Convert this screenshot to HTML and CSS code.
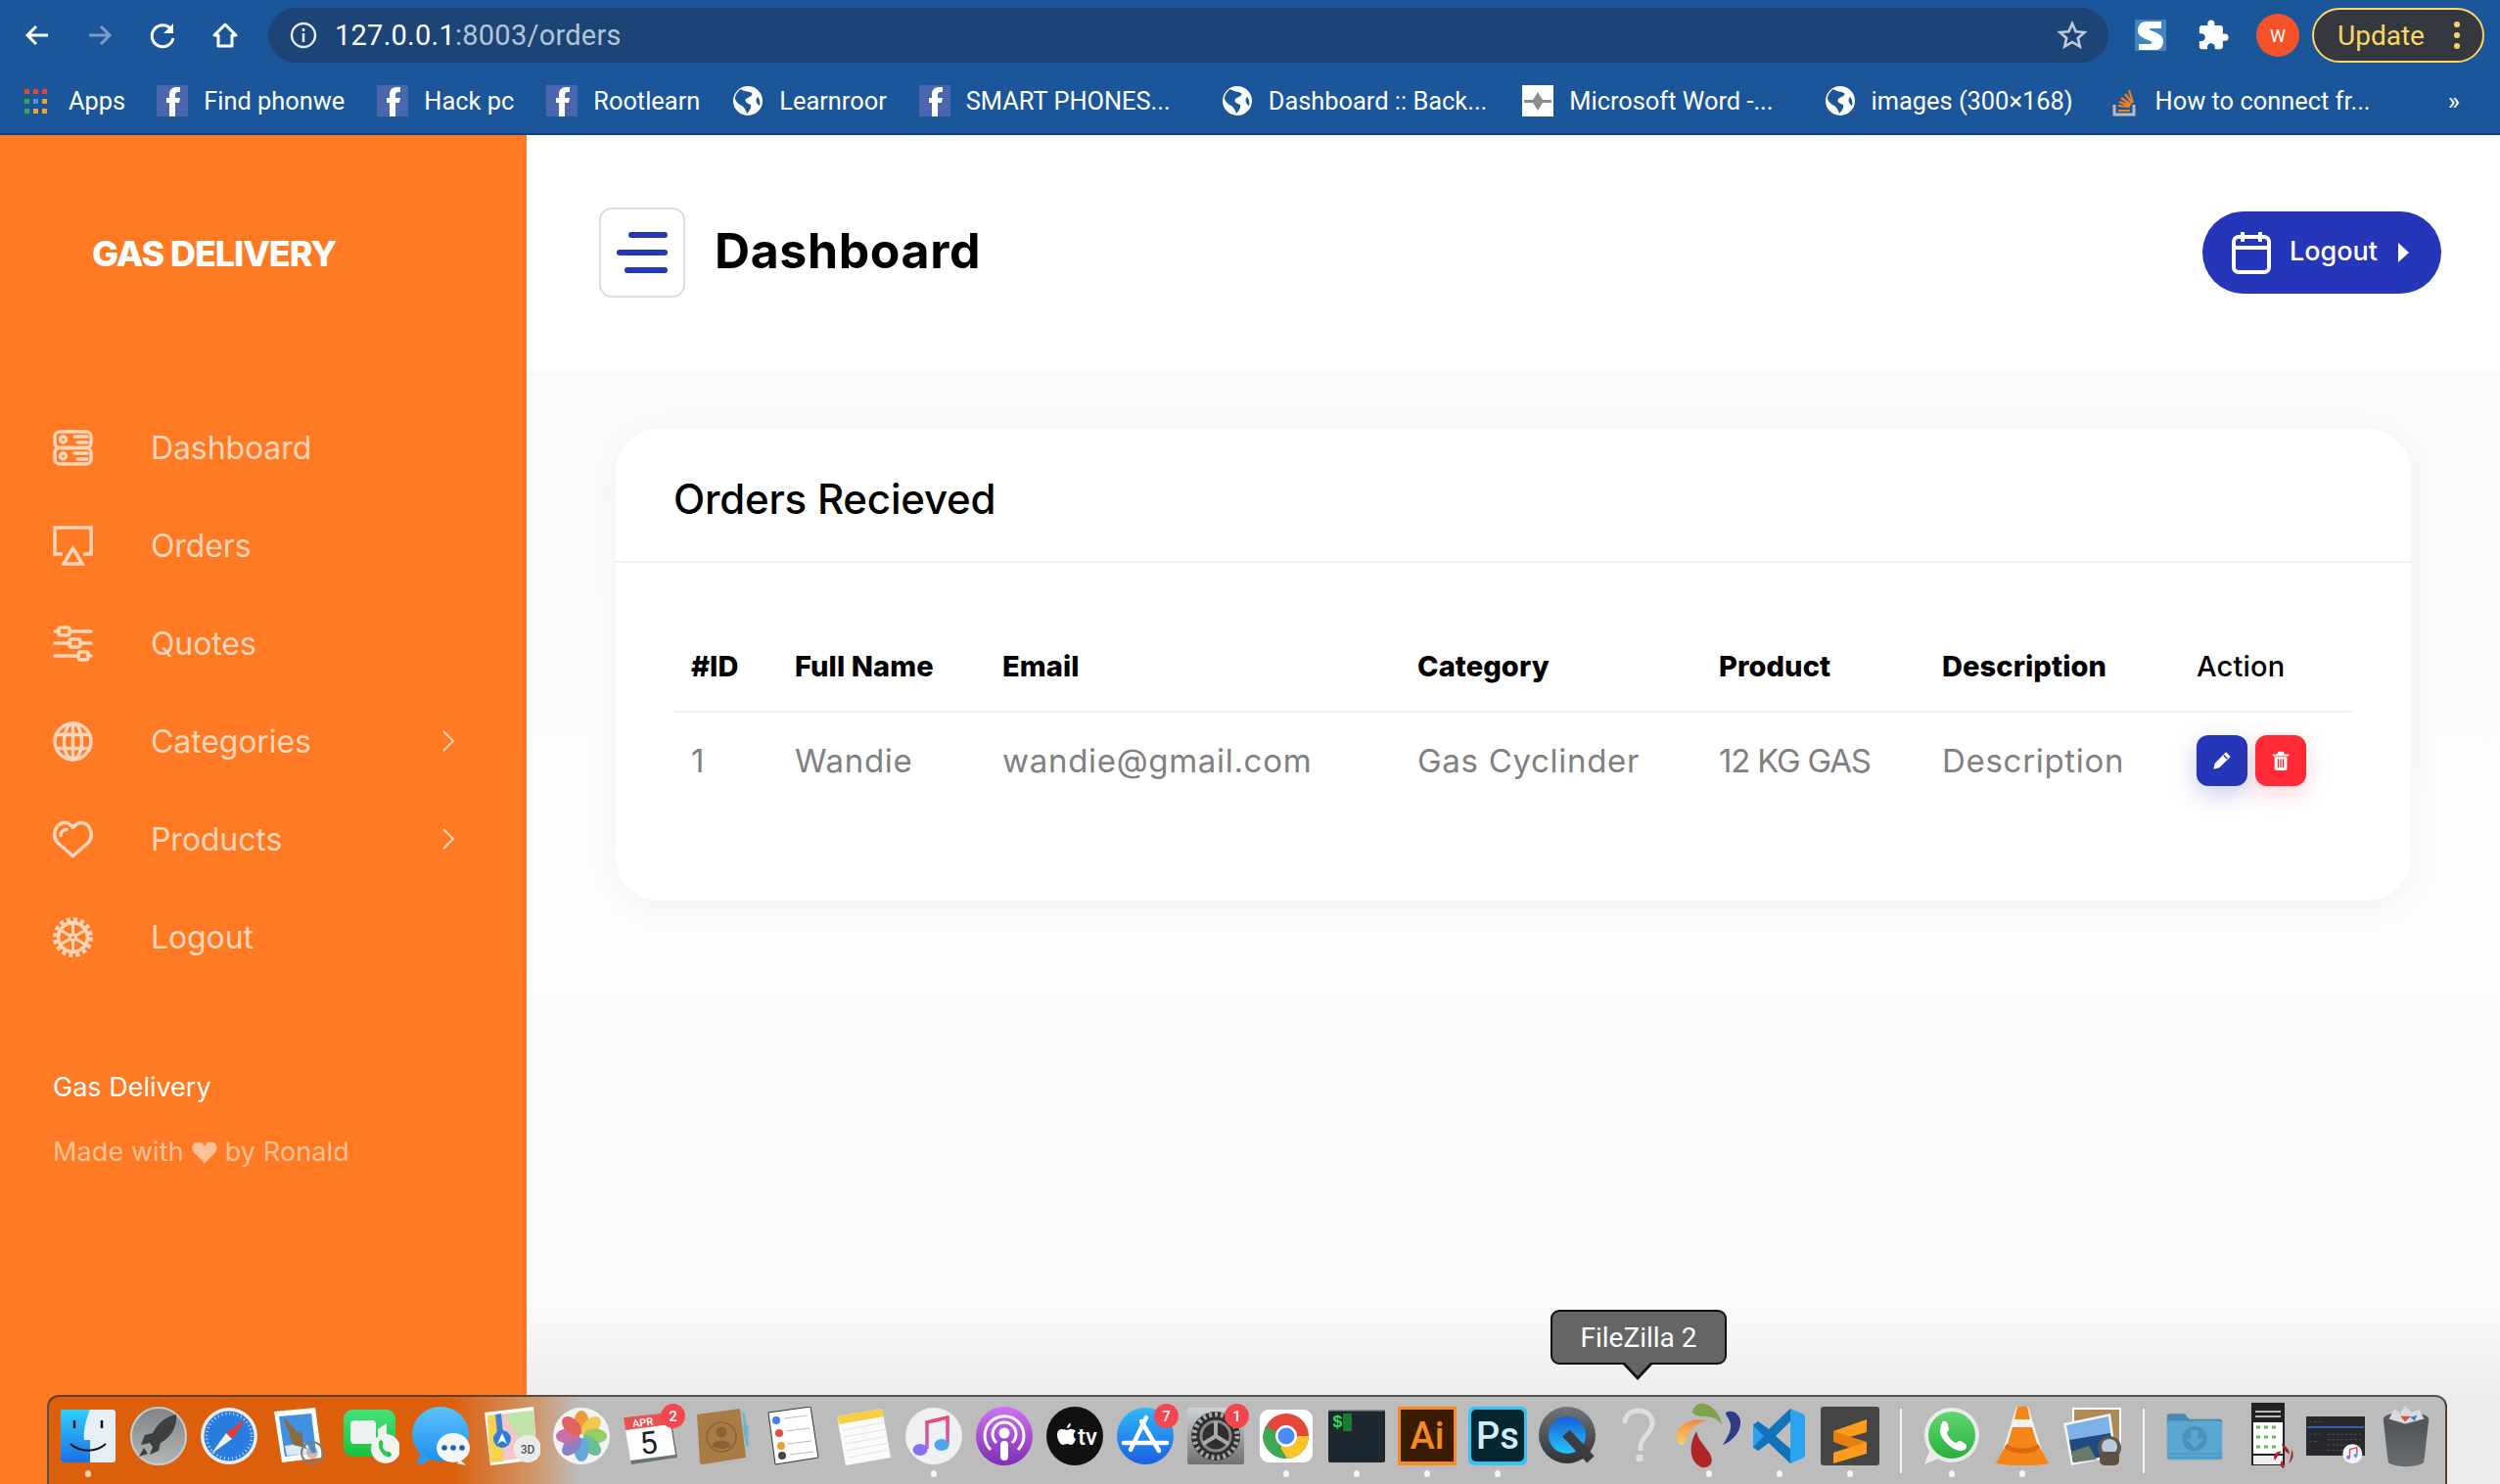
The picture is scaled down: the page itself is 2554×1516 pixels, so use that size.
FILE: index.html
```html
<!DOCTYPE html>
<html lang="en">
<head>
<meta charset="utf-8">
<title>Orders</title>
<link rel="stylesheet" href="styles.css">
</head>
<body>
<div class="screen">
  <header class="chrome">
    <div class="toolbar">
      <div class="nav-icons">
        <svg class="tb-ic" viewBox="0 0 32 32"><path d="M27 16H7M15 7l-9 9 9 9" fill="none" stroke="#fff" stroke-width="3"/></svg>
        <svg class="tb-ic" viewBox="0 0 32 32"><path d="M5 16h20M17 7l9 9-9 9" fill="none" stroke="#7c9cc4" stroke-width="3"/></svg>
        <svg class="tb-ic" viewBox="0 0 32 32"><path d="M25 10a11 11 0 1 0 2 9" fill="none" stroke="#fff" stroke-width="3"/><path d="M27 4v10H17z" fill="#fff"/></svg>
        <svg class="tb-ic" viewBox="0 0 32 32"><path d="M16 5 5 16h4v11h14V16h4z" fill="none" stroke="#fff" stroke-width="3" stroke-linejoin="round"/></svg>
      </div>
      <div class="omnibox">
        <svg class="info-ic" viewBox="0 0 28 28"><circle cx="14" cy="14" r="12" fill="none" stroke="#e6ebf2" stroke-width="2.4"/><path d="M14 12v9M14 7v3" stroke="#e6ebf2" stroke-width="2.6"/></svg>
        <span class="url"><span class="url-host">127.0.0.1</span>:8003/orders</span>
        <svg class="star-ic" viewBox="0 0 32 32"><path d="m16 4 3.6 8.200 8.900.8-6.700 5.900 2 8.700-7.800-4.600-7.800 4.600 2-8.700L3.500 13l8.900-.8z" fill="none" stroke="#c3cbd6" stroke-width="2.600"/></svg>
      </div>
      <svg class="ext-s" viewBox="0 0 32 32"><rect width="32" height="32" fill="#3f85c0"/><path d="M27 9V2H12C5 2 3 7 3 11c0 5 4 7 8 9l5 2c2 1 1 3-1 3H4v6h17c6 0 8-5 8-9 0-5-4-7-8-9l-5-2c-2-1-1-2 1-2z" fill="#fff"/></svg>
      <svg class="ext-p" viewBox="0 0 24 24"><path d="M20.500 11H19V7a2 2 0 0 0-2-2h-4V3.500a2.500 2.500 0 0 0-5 0V5H4a2 2 0 0 0-2 2v3.800h1.500c1.500 0 2.700 1.200 2.700 2.700s-1.200 2.700-2.700 2.700H2V20a2 2 0 0 0 2 2h3.800v-1.500c0-1.500 1.200-2.700 2.700-2.700s2.700 1.200 2.700 2.700V22H17a2 2 0 0 0 2-2v-4h1.500a2.500 2.500 0 0 0 0-5z" fill="#fff"/></svg>
      <span class="avatar">W</span>
      <span class="update"><span>Update</span><span class="update-dots"><i></i><i></i><i></i></span></span>
    </div>
    <nav class="bookmarks">
      <span class="bm bm-apps"><svg class="bm-ic" viewBox="0 0 26 26"><path d="M1 1h5v5H1zM10 1h5v5h-5zM19 1h5v5h-5z" fill="#e8443a"/><path d="M1 11h5v5H1z" fill="#37a853"/><path d="M10 11h5v5h-5z" fill="#4c8df0"/><path d="M19 11h5v5h-5z" fill="#f3a32c"/><path d="M1 21h5v5H1z" fill="#37a853"/><path d="M10 21h5v5h-5z" fill="#f3a32c"/><path d="M19 21h5v5h-5z" fill="#f3a32c"/></svg>Apps</span>
      <span class="bm"><svg class="bm-ic" viewBox="0 0 32 32"><use href="#fb"/></svg>Find phonwe</span>
      <span class="bm"><svg class="bm-ic" viewBox="0 0 32 32"><use href="#fb"/></svg>Hack pc</span>
      <span class="bm"><svg class="bm-ic" viewBox="0 0 32 32"><use href="#fb"/></svg>Rootlearn</span>
      <span class="bm"><svg class="bm-ic" viewBox="0 0 32 32"><use href="#globe"/></svg>Learnroor</span>
      <span class="bm bm-long"><svg class="bm-ic" viewBox="0 0 32 32"><use href="#fb"/></svg>SMART PHONES...</span>
      <span class="bm bm-mid"><svg class="bm-ic" viewBox="0 0 32 32"><use href="#globe"/></svg>Dashboard :: Back...</span>
      <span class="bm bm-long"><svg class="bm-ic" viewBox="0 0 32 32"><rect width="32" height="32" fill="#fff"/><path d="M2 15h9l2-3 3-5 3 5 2 3h9v3h-9l-2 3-3 5-3-5-2-3H2z" fill="#8b8b8b"/></svg>Microsoft Word -...</span>
      <span class="bm bm-mid"><svg class="bm-ic" viewBox="0 0 32 32"><use href="#globe"/></svg>images (300×168)</span>
      <span class="bm"><svg class="bm-ic" viewBox="0 0 32 32"><path d="M6 20v10h20V20" fill="none" stroke="#bcbbbb" stroke-width="3"/><path d="M10 25h12v2H10z" fill="#f48024"/><path d="m10 21 12 1M11 17l11 4M13 13l10 7M17 9l7 9M21 5l4 13" stroke="#f48024" stroke-width="2.200"/></svg>How to connect fr...</span>
      <span class="bm-more">»</span>
    </nav>
  </header>

  <div class="app">
    <aside class="sidebar">
      <div class="brand">GAS DELIVERY</div>
      <ul class="menu">
        <li class="menu-item">
          <svg class="menu-ic" viewBox="0 0 41 37"><g fill="none" stroke="currentColor" stroke-width="3.500"><rect x="2" y="2" width="37" height="16.500" rx="5"/><rect x="2" y="18.500" width="37" height="16.500" rx="5"/><circle cx="10.500" cy="10" r="3"/><circle cx="10.500" cy="27" r="3"/><path d="M22 7h13M25 13h10M22 24h13M25 30h10" stroke-linecap="round"/></g></svg>
          <span>Dashboard</span>
        </li>
        <li class="menu-item">
          <svg class="menu-ic" viewBox="0 0 41 41"><g fill="none" stroke="currentColor" stroke-width="3.500"><path d="M10 29H2V2h37v27h-8"/><path d="m20.500 23 9.500 16H11z"/></g></svg>
          <span>Orders</span>
        </li>
        <li class="menu-item">
          <svg class="menu-ic" viewBox="0 0 41 37"><g fill="none" stroke="currentColor" stroke-width="3.500"><path d="M2 6h4M18 6h21M2 18h16M28 18h11M2 31h24M36 31h3" stroke-linecap="round"/><rect x="6" y="2" width="11" height="8" rx="2"/><rect x="17" y="14" width="11" height="8" rx="2"/><rect x="26" y="27" width="10" height="8" rx="2"/></g></svg>
          <span>Quotes</span>
        </li>
        <li class="menu-item">
          <svg class="menu-ic" viewBox="0 0 41 41"><g fill="none" stroke="currentColor" stroke-width="3.500"><circle cx="20.500" cy="20.500" r="18.500"/><ellipse cx="20.500" cy="20.500" rx="9" ry="18.500"/><path d="M4 13.500h33M4 27.500h33M20.500 2v37"/></g></svg>
          <span>Categories</span>
          <svg class="menu-chev" viewBox="0 0 14 24"><path d="m2 2 10 10L2 22" fill="none" stroke="currentColor" stroke-width="2"/></svg>
        </li>
        <li class="menu-item">
          <svg class="menu-ic" viewBox="0 0 41 38"><g fill="none" stroke="currentColor" stroke-width="3.500" stroke-linecap="round" stroke-linejoin="round"><path d="M20.500 36 5 22.500C-1 16 2 3 11 2c5-.5 7.500 2 9.500 5 2-3 4.500-5.500 9.500-5 9 1 12 14 6 20.500z"/><path d="M8 15c0-3 2-6 6-6"/></g></svg>
          <span>Products</span>
          <svg class="menu-chev" viewBox="0 0 14 24"><path d="m2 2 10 10L2 22" fill="none" stroke="currentColor" stroke-width="2"/></svg>
        </li>
        <li class="menu-item">
          <svg class="menu-ic" viewBox="0 0 40 40"><g fill="none" stroke="currentColor"><circle cx="20" cy="20" r="14.500" stroke-width="3.500"/><circle cx="20" cy="20" r="18" stroke-width="4" stroke-dasharray="4 3.070"/><circle cx="20" cy="20" r="3" stroke-width="3"/><path d="M20 17V6M17.400 21.500 8 27M22.600 21.500 32 27M17.400 18.500 8 13M22.600 18.500 32 13M20 23v11" stroke-width="3"/></g></svg>
          <span>Logout</span>
        </li>
      </ul>
      <div class="side-foot">
        <p class="foot-title">Gas Delivery</p>
        <p class="foot-note">Made with <svg class="foot-heart" viewBox="0 0 32 28"><path d="M16 28 3 15C-2 9 1 1 8 1c4 0 6 2 8 5 2-3 4-5 8-5 7 0 10 8 5 14z" fill="currentColor"/></svg> by Ronald</p>
      </div>
    </aside>

    <main class="main">
      <div class="topbar">
        <button class="toggle" type="button"><i class="bar bar-a"></i><i class="bar bar-b"></i><i class="bar bar-c"></i></button>
        <h1 class="page-title">Dashboard</h1>
        <button class="logout" type="button">
          <svg class="logout-cal" viewBox="0 0 40 44"><g fill="none" stroke="#fff" stroke-width="4"><rect x="2" y="6" width="36" height="36" rx="5"/><path d="M2 17h36M11 1v10M29 1v10"/></g></svg>
          <span>Logout</span>
          <svg class="logout-arrow" viewBox="0 0 12 20"><path d="m1 0 11 10L1 20z" fill="#fff"/></svg>
        </button>
      </div>
      <section class="card">
        <h2 class="card-title">Orders Recieved</h2>
        <div class="card-body">
          <table class="table">
            <colgroup><col class="c-id"><col class="c-name"><col class="c-mail"><col class="c-cat"><col class="c-prod"><col class="c-desc"><col class="c-act"></colgroup>
            <thead>
              <tr><th>#ID</th><th>Full Name</th><th>Email</th><th>Category</th><th>Product</th><th>Description</th><th class="th-action">Action</th></tr>
            </thead>
            <tbody>
              <tr>
                <td>1</td><td>Wandie</td><td>wandie@gmail.com</td><td>Gas Cyclinder</td><td class="td-caps">12 KG GAS</td><td>Description</td>
                <td>
                  <div class="actions">
                    <button class="act act-edit" type="button"><svg viewBox="0 0 24 24"><path d="M16.500 2.500 21.500 7.500 9 20l-6.500 1.500L4 15z" fill="#fff"/><path d="m14 6 4 4" stroke="#2536b8" stroke-width="1.500"/></svg></button>
                    <button class="act act-del" type="button"><svg viewBox="0 0 24 24"><path d="M3 5h18v2H3zM9 2h6l1 3H8z" fill="#fff"/><path d="M5 8h14v13a2 2 0 0 1-2 2H7a2 2 0 0 1-2-2zM8.500 10v10h1.500V10zm2.750 0v10h1.500V10zm2.750 0v10h1.500V10z" fill="#fff" fill-rule="evenodd"/></svg></button>
                  </div>
                </td>
              </tr>
            </tbody>
          </table>
        </div>
      </section>
    </main>
  </div>

  <div class="tooltip"><span>FileZilla 2</span></div>

  <footer class="dock">
    <div class="cell on-orange dot"><svg viewBox="0 0 60 60"><rect x="2" y="3" width="56" height="54" rx="3" fill="#e6eef8"/><path d="M5 3h27c-5 12-7 22-6 31h6v23H5a3 3 0 0 1-3-3V6a3 3 0 0 1 3-3z" fill="url(#gFinder)"/><path d="M16 14v8M44 14v8" stroke="#111" stroke-width="2.500"/><path d="M12 38c10 9 26 9 36 0" stroke="#111" stroke-width="2" fill="none"/></svg></div>
    <div class="cell"><svg viewBox="0 0 60 60"><ellipse cx="30" cy="30" rx="29" ry="30" fill="url(#gLaunch)"/><ellipse cx="30" cy="30" rx="28" ry="29" fill="none" stroke="#c8cacb" stroke-width="2"/><path d="M48 8c-11 2-19 9-24 19l-8 2-4 10 9-2 3 4-3 8 9-4 2-8c11-6 17-16 16-29z" fill="#3d3f41"/><path d="m15 42-5 9 9-3z" fill="#3d3f41"/></svg></div>
    <div class="cell"><svg viewBox="0 0 60 60"><circle cx="30" cy="30" r="29" fill="#e8edf2"/><circle cx="30" cy="30" r="25.500" fill="#2a7de0"/><circle cx="30" cy="30" r="23" fill="none" stroke="#cfe3f8" stroke-width="2.500" stroke-dasharray="1 3"/><path d="m48 12-21 15 6 6z" fill="#f0382c"/><path d="m12 48 21-15-6-6z" fill="#f2f2f2"/></svg></div>
    <div class="cell"><svg viewBox="0 0 60 60"><path d="m4 5 42-4 7 51-41 5z" fill="#fff"/><path d="m9 10 33-3 5 40-32 4z" fill="#4290e0"/><path d="m15 40 22-3 6 11-26 2z" fill="#dbe9f7"/><path d="M14 12c6 4 10 9 13 14 5-1 7 3 6 9l5 9c-5-3-8-4-12-4-5-3-6-8-6-13-3-5-5-9-6-15z" fill="#8a6a3f"/><circle cx="43" cy="47" r="11" fill="none" stroke="#7d7d7d" stroke-width="2"/><circle cx="43" cy="47" r="6" fill="#7d7d7d" opacity=".5"/></svg></div>
    <div class="cell"><svg viewBox="0 0 60 60"><rect x="3" y="3" width="53" height="48" rx="9" fill="url(#gFace)"/><rect x="10" y="14" width="26" height="24" rx="4" fill="#eef2ee"/><path d="m38 23 9-6v20l-9-6z" fill="#eef2ee"/><circle cx="46" cy="43" r="15" fill="#f2f4f1"/><path d="M41 34c2 0 3 4 2 6-1 1 2 5 4 6 2-1 5 1 5 3 0 2-3 3-5 2-5-2-9-9-8-14 0-2 1-3 2-3z" fill="#2dc653"/></svg></div>
    <div class="cell"><svg viewBox="0 0 60 60"><ellipse cx="30" cy="28" rx="29" ry="28" fill="url(#gMsg)"/><path d="m10 46-4 13c6 0 10-2 13-6z" fill="#2e9bf2"/><ellipse cx="43" cy="42" rx="17" ry="15" fill="#f3f6f8"/><path d="m50 54 6 6-9-2z" fill="#f3f6f8"/><circle cx="34" cy="42" r="2.800" fill="#1e5fb0"/><circle cx="43" cy="42" r="2.800" fill="#1e5fb0"/><circle cx="52" cy="42" r="2.800" fill="#1e5fb0"/></svg></div>
    <div class="cell"><svg viewBox="0 0 60 60"><path d="m3 6 50-6 4 54-48 6z" fill="#fff"/><path d="m6 9 47-5 3 46-47 7z" fill="#f7c6c6"/><path d="m24 7 29-3 2 38c-14-5-26-20-31-35z" fill="#bfe3a8"/><path d="m6 9 12-1 4 48-13 1z" fill="#f7d24c"/><path d="m14 8 6-1 3 30h-6z" fill="#3c7fd5"/><circle cx="21" cy="33" r="9" fill="#2d7de0"/><path d="m21 27 5 11-5-3-5 3z" fill="#fff"/><circle cx="47" cy="43" r="14" fill="#ecebeb"/><text class="dock-3d" x="47" y="48" text-anchor="middle">3D</text></svg></div>
    <div class="cell"><svg viewBox="0 0 60 60"><circle cx="30" cy="30" r="29" fill="#f3f3f3"/><g opacity=".85"><ellipse cx="30" cy="16" rx="7.500" ry="12" fill="#f08a1d"/><ellipse cx="30" cy="16" rx="7.500" ry="12" fill="#eec430" transform="rotate(45 30 30)"/><ellipse cx="30" cy="16" rx="7.500" ry="12" fill="#8cc350" transform="rotate(90 30 30)"/><ellipse cx="30" cy="16" rx="7.500" ry="12" fill="#4fb68e" transform="rotate(135 30 30)"/><ellipse cx="30" cy="16" rx="7.500" ry="12" fill="#4a9ed8" transform="rotate(180 30 30)"/><ellipse cx="30" cy="16" rx="7.500" ry="12" fill="#7a6cc0" transform="rotate(225 30 30)"/><ellipse cx="30" cy="16" rx="7.500" ry="12" fill="#c0589b" transform="rotate(270 30 30)"/><ellipse cx="30" cy="16" rx="7.500" ry="12" fill="#e24b47" transform="rotate(315 30 30)"/></g></svg></div>
    <div class="cell"><svg viewBox="0 0 60 60"><path d="m2 14 47-5 7 43-47 7z" fill="#6b7478"/><path d="m1 11 46-5 7 43-46 6z" fill="#fff"/><path d="m1 11 46-5 2 12-46 6z" fill="#e9524f"/><text class="dock-apr" x="21" y="20" text-anchor="middle" transform="rotate(-7 21 20)">APR</text><text class="dock-day" x="28" y="48" text-anchor="middle" transform="rotate(-7 28 48)">5</text></svg><b class="badge">2</b></div>
    <div class="cell"><svg viewBox="0 0 60 60"><path d="M50 6h3l4 34-3 1zM51 20l5-1 1 10-5 1z" fill="#6fb4cf"/><path d="m4 8 44-6 6 50-44 7a3 3 0 0 1-3-2z" fill="#a97b45"/><circle cx="29" cy="31" r="15" fill="none" stroke="#8a6233" stroke-width="1.500"/><circle cx="29" cy="26" r="5.500" fill="#8a6233"/><path d="M19 40c3-7 17-7 20 0-5 4-15 4-20 0z" fill="#8a6233"/></svg></div>
    <div class="cell"><svg viewBox="0 0 60 60"><path d="m5 6 43-6 8 52-44 7z" fill="#fff" stroke="#333" stroke-width="1"/><circle cx="13" cy="14" r="4" fill="#3d7ff0"/><circle cx="16" cy="27" r="4" fill="#ec4a3f"/><circle cx="18" cy="40" r="4" fill="#f0a030"/><circle cx="19" cy="50" r="4" fill="#444"/><path d="m21 12 24-3M23 25l24-3M25 38l24-3M27 49l24-3" stroke="#bbb" stroke-width="1.200"/></svg></div>
    <div class="cell"><svg viewBox="0 0 60 60"><path d="m3 10 46-8 9 50-46 8z" fill="#fafafa"/><path d="m3 10 46-8 2 8-46 8z" fill="#f7cf45"/><path d="m8 24 44-8M10 31l44-8M11 38l44-8M12 45l44-8M14 52l42-8" stroke="#e3e3e3" stroke-width="1"/></svg></div>
    <div class="cell dot"><svg viewBox="0 0 60 60"><circle cx="30" cy="30" r="29" fill="#eef0f2"/><path d="M23 43V16l21-5v28" fill="none" stroke="url(#gMusic)" stroke-width="3.500"/><ellipse cx="16" cy="44" rx="7.500" ry="6" fill="#8a70f0"/><ellipse cx="38" cy="39" rx="7.500" ry="6" fill="#4aa5ee"/></svg></div>
    <div class="cell"><svg viewBox="0 0 60 60"><ellipse cx="30" cy="30" rx="29" ry="30" fill="url(#gPod)"/><g fill="none" stroke="#fff" stroke-width="3"><path d="M16 44a20 20 0 1 1 28 0"/><path d="M22 37a12 12 0 1 1 16 0"/></g><circle cx="30" cy="27" r="5.500" fill="#fff"/><rect x="26" y="35" width="8" height="20" rx="4" fill="#fff"/></svg></div>
    <div class="cell"><svg viewBox="0 0 60 60"><ellipse cx="30" cy="30" rx="29" ry="30" fill="#111"/><path d="M17 23c3 0 4 1 5 1s3-2 5-1c2 0 3 1 4 2-3 2-3 6 0 8-1 3-3 6-5 6-1 0-2-1-4-1s-3 1-4 1c-3 0-6-6-6-10 0-4 2-6 5-6zM22 22c0-3 2-5 4-5 0 3-2 5-4 5z" fill="#fff"/><text class="dock-tv" x="43" y="39" text-anchor="middle">tv</text></svg></div>
    <div class="cell"><svg viewBox="0 0 60 60"><circle cx="30" cy="30" r="29" fill="url(#gStore)"/><path d="M31 11 15 44M26 15l18 30M8 37h44" stroke="#fff" stroke-width="4.500" stroke-linecap="round"/></svg><b class="badge">7</b></div>
    <div class="cell"><svg viewBox="0 0 60 60"><rect x="1" y="1" width="58" height="58" rx="2" fill="url(#gPref)"/><circle cx="30" cy="30" r="25" fill="#2f2f2f"/><circle cx="30" cy="30" r="22" fill="none" stroke="#aaa" stroke-width="5" stroke-dasharray="3 3"/><circle cx="30" cy="30" r="15" fill="none" stroke="#888" stroke-width="3"/><path d="M30 30V15M30 30 17 38M30 30l13 8" stroke="#aaa" stroke-width="4"/></svg><b class="badge">1</b></div>
    <div class="cell dot"><svg viewBox="0 0 60 60"><rect x="3" y="3" width="54" height="54" rx="9" fill="#fff"/><circle cx="30" cy="30" r="23" fill="#e5483b"/><path d="M30 30 9 20a23 23 0 0 0 11 31z" fill="#3ea852"/><path d="M30 30h23a23 23 0 0 1-22 23l-11-2z" fill="#f9c52b"/><path d="M9 20 20 35l11 18c-14 1-25-11-25-23z" fill="#3ea852"/><circle cx="30" cy="30" r="11" fill="#fff"/><circle cx="30" cy="30" r="8.500" fill="#4a8af4"/></svg></div>
    <div class="cell dot"><svg viewBox="0 0 60 60"><rect x="1" y="3" width="58" height="54" rx="2" fill="#1d2730"/><rect x="1" y="3" width="58" height="1.500" fill="#8a9096"/><text class="dock-term" x="5" y="21">$</text><rect x="16" y="7" width="9" height="18" fill="#1c7a33"/></svg></div>
    <div class="cell dot"><svg viewBox="0 0 60 60"><rect width="60" height="60" fill="#f58a1f"/><rect x="3" y="3" width="54" height="53" fill="#3a1b00"/><text class="dock-adobe ai" x="30" y="43" text-anchor="middle">Ai</text></svg></div>
    <div class="cell dot"><svg viewBox="0 0 60 60"><rect width="60" height="60" rx="6" fill="#33c4f4"/><rect x="3" y="3" width="54" height="53" rx="5" fill="#05262f"/><text class="dock-adobe ps" x="30" y="43" text-anchor="middle">Ps</text></svg></div>
    <div class="cell"><svg viewBox="0 0 60 60"><circle cx="29" cy="29" r="29" fill="url(#gQt)"/><circle cx="29" cy="29" r="19" fill="url(#gQtIn)"/><path d="M28 27 53 54" stroke="#3a3d41" stroke-width="10"/></svg></div>
    <div class="cell"><svg viewBox="0 0 60 60"><path d="M16 17c0-9 7-13 14-13 8 0 14 5 14 13 0 10-12 13-12 24v4" fill="none" stroke="#dedede" stroke-width="5"/><rect x="27.500" y="49" width="7" height="7" fill="#dedede"/></svg></div>
    <div class="cell dot wide-ic"><svg viewBox="0 0 68 68"><path d="M17 9C18 3 24 0 29 1c9 2 17 11 18 22-4-7-10-9-18-9-5 0-11-1-12-5z" fill="#7fa34c"/><path d="M51 10c6-3 13 0 15 8 1 10-6 20-18 25 5-8 9-15 8-21-1-6-5-8-5-12z" fill="#2d3c84"/><path d="M31 18C20 15 3 20 1 32c-1 5 1 10 4 11 3 1 4-2 5-5 3-9 10-17 21-20z" fill="url(#gFzO)"/><path d="M21 29c-5 9-7 18-4 27 2 6 8 11 13 10 6-1 8-6 6-11-2-6-7-10-10-15-3-4-4-7-5-11z" fill="#ad2429"/></svg></div>
    <div class="cell dot"><svg viewBox="0 0 60 60"><path d="m41 2 12 5c2 1 3 2 3 4v38c0 2-1 3-3 4l-12 5-22-21-11 8-5-3V18l5-3 11 8z" fill="#2ba3ef"/><path d="M41 2v56L19 37 8 45l-5-4 11-11L3 19l5-4 11 8z" fill="#1273bb"/><path d="M41 15 26 30l15 13z" fill="#bdbdbd"/></svg></div>
    <div class="cell dot"><svg viewBox="0 0 60 60"><rect width="60" height="60" rx="3" fill="#454545"/><path d="M47 13v13L13 36V25z" fill="#ff9a1a"/><path d="M13 25 47 36v12l-34-12z" fill="#e57f10"/><path d="M47 36v12L13 58V47z" fill="#ff9a1a"/></svg></div>
    <div class="sep"></div>
    <div class="cell dot"><svg viewBox="0 0 60 60"><path d="M30 1a28 28 0 0 1 0 56c-5 0-10-1-14-4L2 59l5-14A28 28 0 0 1 30 1z" fill="#eaeceb"/><circle cx="30" cy="29" r="24" fill="url(#gWa)"/><path d="M21 15c2-1 4 0 5 3l1 5c0 2-2 2-2 4 1 4 5 8 9 10 2 0 3-3 5-2l5 3c2 2 1 5-1 6-3 2-7 1-11-1-7-4-13-11-14-17 0-5 1-9 3-11z" fill="#fff"/></svg></div>
    <div class="cell dot"><svg viewBox="0 0 60 60"><path d="m24 0h12l18 58c0 2-48 2-48 0z" fill="#f1f1f1"/><path d="M25 0h10l3 13H22zM20 21h20l5 17c-7 4-23 4-30 0z" fill="#f58518"/><path d="M14 38h32l11 20c-15 3-40 3-54 0z" fill="#f58518"/><path d="M15 38c3 6 27 6 30 0l3 3c-4 9-32 9-36 0z" fill="#d96a10"/></svg></div>
    <div class="cell"><svg viewBox="0 0 60 60"><rect x="9" y="1" width="50" height="40" fill="#fff"/><rect x="11" y="3" width="46" height="36" fill="#b08a55"/><path d="m0 17 48-10 6 44-46 9z" fill="#f4f4f4"/><path d="m3 19 43-9 5 39-41 8z" fill="#7eb2e6"/><path d="m6 34 42-7 3 22-41 8z" fill="#1f4a80"/><path d="m8 46 18-6 8 14-24 3z" fill="#6a7a68"/><circle cx="47" cy="42" r="12" fill="#5d5954"/><circle cx="47" cy="41" r="8" fill="#b9cbdc"/><rect x="37" y="46" width="20" height="14" rx="5" fill="#5d5042"/></svg></div>
    <div class="sep"></div>
    <div class="cell"><svg viewBox="0 0 66 60"><path d="M2 8a3 3 0 0 1 3-3h17l5 6h34a3 3 0 0 1 3 3v6H2z" fill="#4b88ad"/><rect x="2" y="13" width="62" height="44" rx="3" fill="#5aa7d2"/><circle cx="33" cy="33" r="14" fill="#4a90bc"/><path d="M29 23h8v10h6L33 44 23 33h6z" fill="#5aa7d2"/><path d="M2 50h62M2 54h62" stroke="#4a90bc"/></svg></div>
    <div class="cell cell-xampp"><svg viewBox="0 0 60 68"><rect x="13" width="34" height="64" fill="#222"/><rect x="15" y="20" width="30" height="32" fill="#fff"/><rect x="15" y="54" width="30" height="9" fill="#eee"/><path d="M18 25h24M18 35h24M18 45h24" stroke="#6bbf59" stroke-width="3" stroke-dasharray="4 4"/><path d="M17 8h26v2H17zM17 13h26v2H17z" fill="#bbb"/><path d="M44 42c4 2 8 6 8 10-4-1-7-5-8-10zM54 48c3 4 2 10-3 14 2-5 3-9 3-14zM36 56c0-4 4-7 8-6-3 2-5 6-7 9zM44 59c1 3 4 5 2 8-4-1-4-6-2-8z" fill="#ad2429"/></svg></div>
    <div class="cell cell-itunes"><svg viewBox="0 0 66 60"><rect x="0" y="8" width="66" height="44" fill="#26282b"/><path d="M1 20h64" stroke="#2f6bd4" stroke-width="2"/><path d="M4 14h14M4 28h12M4 36h10M24 28h38M24 34h38M24 40h38M24 46h30" stroke="#555" stroke-dasharray="3 2"/><circle cx="52" cy="50" r="11" fill="#f2f4f6"/><path d="M49 53v-8l8-2v8" fill="none" stroke="#e7476a" stroke-width="1.600"/><circle cx="47.500" cy="54" r="2.200" fill="#7a70ea"/><circle cx="55.500" cy="52" r="2.200" fill="#4aa5ee"/></svg></div>
    <div class="cell cell-trash"><svg viewBox="0 0 60 66"><path d="M6 16h48l-5 44c-2 7-36 7-38 0z" fill="url(#gTrash)"/><ellipse cx="30" cy="15" rx="24" ry="7" fill="#55595c"/><path d="m12 15 6-11 6 5 5-8 7 7 8-3 5 10-20 5z" fill="#d8dadd"/><path d="m24 12 5 6 6-6z" fill="#d94f3d"/><path d="m34 13 5 4 3-6z" fill="#3c7fd5"/></svg></div>
  </footer>
</div>

<svg class="defs" aria-hidden="true">
  <defs>
    <linearGradient id="gFinder" x1="0" y1="0" x2="0" y2="1"><stop offset="0" stop-color="#2ed0fa"/><stop offset="1" stop-color="#1e6fe8"/></linearGradient>
    <linearGradient id="gLaunch" x1="0" y1="0" x2="0" y2="1"><stop offset="0" stop-color="#7f8385"/><stop offset="1" stop-color="#b4b6b7"/></linearGradient>
    <linearGradient id="gFace" x1="0" y1="0" x2="0" y2="1"><stop offset="0" stop-color="#45e27a"/><stop offset="1" stop-color="#18c13c"/></linearGradient>
    <linearGradient id="gMsg" x1="0" y1="0" x2="0" y2="1"><stop offset="0" stop-color="#5dc3fa"/><stop offset="1" stop-color="#1d8ff0"/></linearGradient>
    <linearGradient id="gMusic" x1="0" y1="0" x2="0" y2="1"><stop offset="0" stop-color="#f0466a"/><stop offset="1" stop-color="#b068d8"/></linearGradient>
    <linearGradient id="gPod" x1="0" y1="0" x2="0" y2="1"><stop offset="0" stop-color="#d070f5"/><stop offset="1" stop-color="#7b2fb0"/></linearGradient>
    <linearGradient id="gStore" x1="0" y1="0" x2="0" y2="1"><stop offset="0" stop-color="#2fb8fa"/><stop offset="1" stop-color="#1a5fe0"/></linearGradient>
    <linearGradient id="gPref" x1="0" y1="0" x2="0" y2="1"><stop offset="0" stop-color="#d0d3d5"/><stop offset="1" stop-color="#6f7173"/></linearGradient>
    <linearGradient id="gQt" x1="0" y1="0" x2="0" y2="1"><stop offset="0" stop-color="#70757b"/><stop offset="1" stop-color="#2f3236"/></linearGradient>
    <linearGradient id="gQtIn" x1="0" y1="0" x2="0" y2="1"><stop offset="0" stop-color="#1460d8"/><stop offset="1" stop-color="#28c4f8"/></linearGradient>
    <linearGradient id="gFzO" x1="0" y1="0" x2="0" y2="1"><stop offset="0" stop-color="#f2873f"/><stop offset="1" stop-color="#f7d36a"/></linearGradient>
    <linearGradient id="gWa" x1="0" y1="0" x2="0" y2="1"><stop offset="0" stop-color="#62d66f"/><stop offset="1" stop-color="#28b03e"/></linearGradient>
    <linearGradient id="gTrash" x1="0" y1="0" x2="0" y2="1"><stop offset="0" stop-color="#505356"/><stop offset="1" stop-color="#6a6d70"/></linearGradient>
    <symbol id="fb" viewBox="0 0 32 32"><rect width="32" height="32" fill="#4a67ae"/><path d="M19 32V18h4l1-5h-5v-3c0-2 1-3 3-3h2V2h-4c-4 0-7 3-7 7v4h-3v5h3v14z" fill="#fff"/></symbol>
    <symbol id="globe" viewBox="0 0 32 32"><circle cx="16" cy="16" r="15" fill="#fff"/><path d="M9 4c3 3 8 2 11 4 2 3-4 4-6 6-2 3 2 5 5 6 1 3-2 7-4 9-1-3-2-6-5-8-3-1-6-4-7-7 0-4 3-8 6-10zM26 12c2 2 3 6 2 9-3-2-5-6-2-9z" fill="#1a5699"/></symbol>
  </defs>
</svg>
</body>
</html>
```

FILE: styles.css
```css
* { box-sizing: border-box; }
html, body { margin: 0; padding: 0; height: 100%; }
body { font-family: "Inter", "Liberation Sans", sans-serif; background: #fafafa; overflow: hidden; }
.defs { position: absolute; width: 0; height: 0; }
.screen { position: relative; width: 2554px; height: 1516px; display: flex; flex-direction: column; overflow: hidden; }

/* Browser chrome */
.chrome { height: 138px; flex: none; background: #1a5699; border-bottom: 2px solid #123f73; display: flex; flex-direction: column; }
.toolbar { height: 72px; display: flex; align-items: center; padding: 0 0 0 22px; }
.nav-icons { display: flex; gap: 32px; align-items: center; }
.tb-ic { width: 32px; height: 32px; display: block; }
.omnibox { margin-left: 28px; width: 1880px; height: 56px; border-radius: 28px; background: #1c4476; display: flex; align-items: center; padding: 0 21px 0 22px; color: #b5c3d6; font-family: "Roboto", sans-serif; font-size: 29px; }
.info-ic { width: 28px; height: 28px; flex: none; }
.url { margin-left: 18px; letter-spacing: .25px; flex: 1; }
.url-host { color: #fff; }
.star-ic { width: 32px; height: 32px; flex: none; }
.ext-s { width: 32px; height: 32px; margin-left: 27px; flex: none; }
.ext-p { width: 34px; height: 34px; margin-left: 31px; flex: none; }
.avatar { width: 44px; height: 44px; margin-left: 27px; border-radius: 50%; background: #f4532a; color: #fff; font-size: 18px; font-family: "Roboto", sans-serif; display: flex; align-items: center; justify-content: center; flex: none; }
.update { margin-left: 13px; width: 176px; height: 56px; border: 2px solid #fdd663; border-radius: 28px; background: #35393f; color: #fdd663; font-family: "Roboto", sans-serif; font-size: 28px; display: flex; align-items: center; padding-left: 24px; gap: 30px; flex: none; }
.update-dots { display: flex; flex-direction: column; gap: 5px; }
.update-dots i { width: 6px; height: 6px; border-radius: 50%; background: #fdd663; display: block; }
.bookmarks { flex: 1; display: flex; align-items: center; color: #fff; font-family: "Roboto", sans-serif; font-size: 25.4px; padding: 0 0 2px 24px; }
.bm { display: flex; align-items: center; gap: 16px; white-space: nowrap; margin-right: 33px; }
.bm-long { margin-right: 52px; }
.bm-mid { margin-right: 36px; }
.bm-apps { gap: 20px; margin-right: 32px; }
.bm-ic { width: 32px; height: 32px; flex: none; }
.bm-apps .bm-ic { width: 26px; height: 26px; }
.bm-more { margin-left: auto; margin-right: 41px; font-size: 26px; }

/* Layout */
.app { flex: 1; display: flex; min-height: 0; }
.sidebar { width: 538px; flex: none; background: #ff7a22; color: #ffd6bb; }
.brand { margin: 99px 0 0 94px; height: 44px; line-height: 44px; color: #fff; font-size: 36px; font-weight: 800; letter-spacing: -1.1px; white-space: nowrap; }
.menu { list-style: none; margin: 156px 0 0; padding: 0 73px 0 54px; display: flex; flex-direction: column; gap: 60px; }
.menu-item { height: 40px; display: flex; align-items: center; font-size: 32px; letter-spacing: -.1px; }
.menu-item span { margin-left: 59px; flex: 1; }
.menu-ic { width: 41px; height: 41px; flex: none; }
.menu-chev { width: 14px; height: 24px; flex: none; }
.side-foot { margin: 117px 0 0 54px; }
.foot-title { margin: 0; color: #fff; font-size: 27px; line-height: 34px; }
.foot-note { margin: 32px 0 0; font-size: 27px; line-height: 34px; letter-spacing: .1px; color: #ffc199; display: flex; align-items: center; gap: 8px; }
.foot-heart { width: 26px; height: 24px; }

.main { flex: 1; display: flex; flex-direction: column; min-width: 0; background: linear-gradient(#fafafa 0, #fdfdfd 700px, #fcfcfc 1190px, #ececec 1290px); }
.topbar { height: 240px; background: #fff; flex: none; display: flex; align-items: center; padding: 0 60px 0 74px; }
.toggle { width: 88px; height: 92px; padding: 0 16px 0 0; border: 2px solid #dcdcdc; border-radius: 13px; background: #fff; display: flex; flex-direction: column; align-items: flex-end; justify-content: center; gap: 12px; flex: none; }
.bar { display: block; height: 6px; border-radius: 3px; background: #2536b8; }
.bar-a { width: 40px; }
.bar-b { width: 52px; }
.bar-c { width: 44px; }
.page-title { margin: -4px 0 0 30px; font-size: 50px; font-weight: 700; color: #000; letter-spacing: .6px; flex: 1; }
.logout { width: 244px; height: 84px; border: 0; border-radius: 42px; background: #2536b8; color: #fff; font: 500 27px "Inter", sans-serif; display: flex; align-items: center; padding: 0 0 0 30px; flex: none; }
.logout-cal { width: 40px; height: 44px; flex: none; }
.logout span { margin-left: 19px; margin-top: -3px; }
.logout-arrow { width: 12px; height: 20px; margin-left: 20px; flex: none; }

/* Card */
.card { margin: 60px 91px 0; height: 482px; background: #fff; border-radius: 44px; box-shadow: 0 4px 36px rgba(0, 0, 0, .05); }
.card-title { margin: 0; height: 137px; padding: 8px 59px 0; display: flex; align-items: center; font-size: 42px; font-weight: 500; color: #000; letter-spacing: -.2px; border-bottom: 2px solid #f1f1f1; }
.card-body { padding: 78px 59px 0; }
.table { width: 100%; border-collapse: collapse; table-layout: fixed; }
.c-id { width: 106px; }
.c-name { width: 212px; }
.c-mail { width: 424px; }
.c-cat { width: 308px; }
.c-prod { width: 228px; }
.c-desc { width: 260px; }
.table th, .table td { padding: 0 0 0 18px; text-align: left; white-space: nowrap; }
.table th { height: 74px; padding-bottom: 18px; font-size: 29px; font-weight: 800; color: #000; letter-spacing: .1px; border-bottom: 2px solid #f1f1f1; }
.table th.th-action { font-weight: 500; letter-spacing: .2px; }
.table td { height: 98px; font-size: 33px; color: #808080; letter-spacing: .7px; }
.table td.td-caps { letter-spacing: -1.2px; }
.actions { display: flex; gap: 8px; }
.act { width: 52px; height: 52px; padding: 0; border: 0; border-radius: 12px; display: flex; align-items: center; justify-content: center; }
.act svg { width: 22px; height: 22px; }
.act-edit { background: #2536b8; box-shadow: 0 8px 24px rgba(37, 54, 184, .25); }
.act-del { background: #ff2a35; box-shadow: 0 8px 24px rgba(255, 42, 53, .2); }

/* Tooltip over the dock */
.tooltip { position: absolute; left: 1584px; top: 1338px; width: 180px; height: 56px; border: 2px solid #111; border-radius: 9px; background: #656565; color: #fff; font-family: "Roboto", "Liberation Sans", sans-serif; font-size: 28px; display: flex; align-items: center; justify-content: center; }
.tooltip::after { content: ""; position: absolute; left: 72px; top: 54px; width: 0; height: 0; border-left: 15px solid transparent; border-right: 15px solid transparent; border-top: 16px solid #111; }
.tooltip::before { content: ""; position: absolute; z-index: 1; left: 74px; top: 52px; width: 0; height: 0; border-left: 13px solid transparent; border-right: 13px solid transparent; border-top: 14px solid #656565; }

/* Dock */
.dock { position: absolute; left: 48px; right: 54px; top: 1425px; bottom: -10px; padding: 6px 0 0 4px; border: 2px solid rgba(50, 50, 50, .75); border-bottom: 0; border-radius: 12px 12px 0 0; background: linear-gradient(90deg, #dc5f0c 0, #dc5f0c 410px, #ce9a70 500px, #bcbcbc 540px, #bcbcbc 100%); display: flex; align-items: flex-start; }
.cell { position: relative; width: 72px; height: 76px; flex: none; display: flex; justify-content: center; padding-top: 4px; }
.cell > svg { width: 60px; height: 60px; display: block; }
.cell.dot::after { content: ""; position: absolute; left: 33px; top: 69px; width: 6px; height: 7px; border-radius: 50%; background: #f5f5f5; }
.cell.on-orange.dot::after { background: #ffd6a8; }
.wide-ic > svg { width: 68px; height: 68px; margin-top: -4px; }
.sep { width: 32px; height: 66px; flex: none; margin-top: 6px; position: relative; }
.sep::after { content: ""; position: absolute; left: 15px; top: 0; bottom: 0; width: 2px; background: #f3f3f3; }
.cell-xampp { margin-left: 3px; }
.cell-xampp > svg { width: 60px; height: 68px; margin-top: -4px; }
.cell-itunes { margin-left: -3px; }
.cell-trash > svg { width: 58px; height: 64px; margin-top: -2px; }
.badge { position: absolute; left: 45px; top: 1px; width: 25px; height: 25px; border-radius: 50%; background: #f5454f; color: #fff; font: 500 15px "Roboto", sans-serif; display: flex; align-items: center; justify-content: center; }
.dock-3d { font: 500 12px "Roboto", sans-serif; fill: #555; }
.dock-apr { font: 500 11px "Roboto", sans-serif; fill: #fff; }
.dock-day { font: 400 32px "Roboto", sans-serif; fill: #222; }
.dock-tv { font: 500 24px "Roboto", sans-serif; fill: #fff; }
.dock-term { font: 700 18px "Liberation Mono", monospace; fill: #2fdc4a; }
.dock-adobe { font: 500 38px "Roboto", sans-serif; }
.dock-adobe.ai { fill: #f58a1f; }
.dock-adobe.ps { fill: #cfeefa; }
```
